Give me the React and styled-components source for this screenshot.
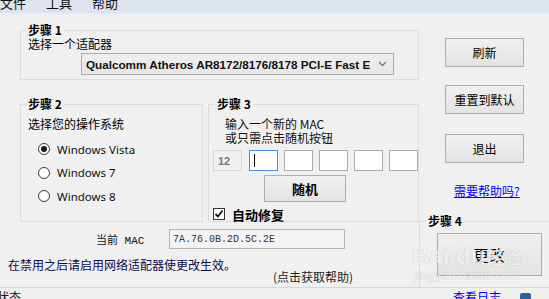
import React from 'react';
import styled, { createGlobalStyle, css } from 'styled-components';

const CJK = '"Noto Sans CJK SC", sans-serif';
const LATIN = '"Noto Sans", "Noto Sans CJK SC", sans-serif';
const MONO = '"Liberation Mono", "Noto Sans CJK SC", monospace';

const GlobalStyle = createGlobalStyle`
  html, body {
    margin: 0;
    padding: 0;
    background: #f0f0f0;
    overflow: hidden;
  }
  body {
    font-family: ${CJK};
    font-size: 12px;
    color: #000;
  }
`;

const Window = styled.div`
  position: relative;
  width: 549px;
  height: 299px;
  overflow: hidden;
  background: #f0f0f0;
`;

const MenuBar = styled.div`
  display: flex;
  gap: 20px;
  height: 13px;
  overflow: hidden;
  background: #dde4ee;
  border-bottom: 2px solid #e9eef5;
`;

const MenuItem = styled.span`
  font-size: 13px;
  line-height: 13px;
  margin-top: -4px;
  color: #111;
`;

const Main = styled.div`
  display: grid;
  grid-template-columns: 419px 130px;
  height: 272px;
`;

const Column = styled.div`
  display: flex;
  flex-direction: column;
  align-items: flex-start;
`;

const GroupBox = styled.fieldset`
  margin: 0;
  padding: 0;
  min-width: 0;
  box-sizing: border-box;
  border: 1px solid #dcdcdc;
`;

const Legend = styled.legend`
  margin-left: ${(p) => p.$offset || 5}px;
  padding: 0 2px;
  font-size: 12px;
  font-weight: 700;
  line-height: 14px;
`;

const Group1 = styled(GroupBox)`
  margin: 8px 0 0 20px;
  width: 399px;
`;

const GroupBody = styled.div`
  display: flex;
  flex-direction: column;
  align-items: flex-start;
  padding: ${(p) => p.$pad};
`;

const Caption = styled.div`
  line-height: 14px;
  margin-top: ${(p) => p.$top || 0}px;
  white-space: nowrap;
`;

const Combo = styled.div`
  display: flex;
  align-items: center;
  justify-content: space-between;
  box-sizing: border-box;
  width: 313px;
  height: 22px;
  margin: 2px 0 0 53px;
  padding: 0 6px 0 4px;
  border: 1px solid #acacac;
  background: linear-gradient(#efefef, #e6e6e6);
`;

const ComboText = styled.span`
  font-family: "Liberation Sans", sans-serif;
  font-size: 11.7px;
  font-weight: 700;
  color: #111;
  white-space: nowrap;
  overflow: hidden;
`;

const GroupRow = styled.div`
  display: flex;
  gap: 5px;
  margin: 17px 0 0 20px;
`;

const Group = styled(GroupBox)`
  width: ${(p) => p.$width}px;
  height: 125px;
`;

const RadioList = styled.div`
  display: flex;
  flex-direction: column;
  margin-top: 6.5px;
`;

const RadioRow = styled.label`
  display: flex;
  align-items: center;
  gap: 7px;
  height: 23.5px;
  padding-left: 10px;
  font-family: ${LATIN};
  font-size: 11.5px;
  color: #111;
`;

const RadioDot = styled.span`
  position: relative;
  width: 12px;
  height: 12px;
  box-sizing: border-box;
  border: 1px solid #3a3a3a;
  border-radius: 50%;
  background: #fff;

  ${(p) =>
    p.$checked &&
    css`
      &::after {
        content: '';
        position: absolute;
        left: 2px;
        top: 2px;
        width: 6px;
        height: 6px;
        border-radius: 50%;
        background: #1a1a1a;
      }
    `}
`;

const Instructions = styled.div`
  margin: 6px 0 0 12px;
  line-height: 14px;
  color: #111;
`;

const MacInputs = styled.div`
  display: flex;
  gap: 6px;
  margin-top: 5px;
`;

const PrefixBox = styled.div`
  display: flex;
  align-items: center;
  box-sizing: border-box;
  width: 29px;
  height: 21px;
  margin-right: 1px;
  padding-left: 4px;
  border: 1px solid #d9d9d9;
  background: #f0f0f0;
  font-family: "Liberation Sans", sans-serif;
  font-size: 11px;
  font-weight: 700;
  color: #7a7a7a;
`;

const ByteBox = styled.div`
  display: flex;
  align-items: center;
  box-sizing: border-box;
  width: 29px;
  height: 21px;
  padding-left: 4px;
  border: 1px solid ${(p) => (p.$focused ? '#4a8fd8' : '#abadb3')};
  background: #fff;
`;

const Caret = styled.span`
  width: 1px;
  height: 13px;
  background: #000;
`;

const Button = styled.div`
  display: flex;
  align-items: center;
  justify-content: center;
  box-sizing: border-box;
  border: 1px solid #adadad;
  background: linear-gradient(#f0f0f0, #e3e3e3);
  color: #000;
  white-space: nowrap;
`;

const RandomButton = styled(Button)`
  width: 82px;
  height: 27px;
  margin: 4px 0 0 51px;
  font-size: 13px;
  font-weight: 700;
`;

const CheckRow = styled.div`
  display: flex;
  align-items: center;
  gap: 7px;
  height: 12px;
  margin-top: 6px;
  font-size: 13px;
  font-weight: 700;
`;

const CheckBox = styled.span`
  display: flex;
  align-items: center;
  justify-content: center;
  width: 12px;
  height: 12px;
  box-sizing: border-box;
  border: 1px solid #333;
  background: #fff;
`;

const MacRow = styled.div`
  display: flex;
  align-items: center;
  margin: 7px 0 0 96px;
`;

const MacLabel = styled.span`
  width: 73px;
  font-family: ${MONO};
  font-size: 11px;
  color: #111;
  white-space: pre;
`;

const MacField = styled.div`
  display: flex;
  align-items: center;
  box-sizing: border-box;
  width: 176px;
  height: 20px;
  padding-left: 3px;
  border: 1px solid #b4b4b4;
  background: #f3f3f3;
  font-family: ${MONO};
  font-size: 10px;
  color: #333;
`;

const Notice = styled.div`
  margin: 9px 0 0 8px;
  line-height: 14px;
  color: #0b0b4c;
  white-space: nowrap;
`;

const HelpHint = styled.div`
  margin: -2px 0 0 273px;
  line-height: 14px;
  color: #222;
  white-space: nowrap;
`;

const SideButton = styled(Button)`
  width: 79px;
  height: 29px;
  margin: ${(p) => p.$top}px 0 0 26px;
  font-size: 12px;
`;

const HelpLink = styled.a`
  margin: 21px 0 0 35px;
  line-height: 14px;
  color: #0000ff;
  text-decoration: underline;
  white-space: nowrap;
`;

const Group4 = styled(GroupBox)`
  flex: 1;
  width: 140px;
  margin-top: 16px;
  border-bottom: none;
`;

const ChangeButton = styled(Button)`
  width: 105px;
  height: 43px;
  margin: 5px 0 0 17px;
  font-size: 15px;
  letter-spacing: 1px;
`;

const StatusBar = styled.div`
  display: flex;
  align-items: flex-start;
  height: 11px;
  overflow: hidden;
  border-top: 1px solid #d6d6d6;
`;

const StatusText = styled.span`
  margin: 2px 0 0 -3px;
  line-height: 14px;
  color: #111;
`;

const LogLink = styled.a`
  margin: 2px 0 0 auto;
  line-height: 14px;
  color: #0000ff;
  white-space: nowrap;
`;

const LogIcon = styled.span`
  width: 11px;
  height: 12px;
  margin: 5px 18px 0 19px;
  border-radius: 2px;
  background: #2f5f9e;
`;

const Watermark = styled.div`
  position: absolute;
  left: 412px;
  top: 243px;
  display: flex;
  flex-direction: column;
  pointer-events: none;
  color: rgba(255, 255, 255, 0.8);
  text-shadow: 0 0 1px rgba(0, 0, 0, 0.25);
`;

const WatermarkLogo = styled.div`
  display: flex;
  align-items: baseline;
  gap: 2px;
  font-family: "Liberation Sans", sans-serif;
  font-size: 24px;
  font-weight: 700;
  line-height: 26px;
`;

const WatermarkSub = styled.span`
  font-family: ${CJK};
  font-size: 17px;
  font-weight: 700;
`;

const WatermarkUrl = styled.div`
  margin-left: 2px;
  font-family: "Liberation Sans", sans-serif;
  font-size: 12px;
  line-height: 13px;
  letter-spacing: 0.5px;
`;

const osList = [
  { name: 'Windows Vista', checked: true },
  { name: 'Windows 7', checked: false },
  { name: 'Windows 8', checked: false },
];

const App = () => (
  <Window>
    <GlobalStyle />
    <MenuBar>
      <MenuItem>文件</MenuItem>
      <MenuItem>工具</MenuItem>
      <MenuItem>帮助</MenuItem>
    </MenuBar>
    <Main>
      <Column>
        <Group1>
          <Legend>步骤 1</Legend>
          <GroupBody $pad="0 0 4px 7px">
            <Caption>选择一个适配器</Caption>
            <Combo>
              <ComboText>Qualcomm Atheros AR8172/8176/8178 PCI-E Fast E</ComboText>
              <svg width="9" height="6" viewBox="0 0 9 6">
                <polyline points="1,1 4.5,4.5 8,1" fill="none" stroke="#777" strokeWidth="1.3" />
              </svg>
            </Combo>
          </GroupBody>
        </Group1>
        <GroupRow>
          <Group $width={183}>
            <Legend>步骤 2</Legend>
            <GroupBody $pad="0 0 0 7px">
              <Caption $top={6}>选择您的操作系统</Caption>
              <RadioList>
                {osList.map((os) => (
                  <RadioRow key={os.name}>
                    <RadioDot $checked={os.checked} />
                    {os.name}
                  </RadioRow>
                ))}
              </RadioList>
            </GroupBody>
          </Group>
          <Group $width={211}>
            <Legend $offset={6}>步骤 3</Legend>
            <GroupBody $pad="0 0 0 4px">
              <Instructions>
                输入一个新的 MAC
                <br />
                或只需点击随机按钮
              </Instructions>
              <MacInputs>
                <PrefixBox>12</PrefixBox>
                <ByteBox $focused>
                  <Caret />
                </ByteBox>
                <ByteBox />
                <ByteBox />
                <ByteBox />
                <ByteBox />
              </MacInputs>
              <RandomButton>随机</RandomButton>
              <CheckRow>
                <CheckBox>
                  <svg width="10" height="10" viewBox="0 0 10 10">
                    <polyline points="1.5,5 4,7.5 8.5,1.5" fill="none" stroke="#111" strokeWidth="1.8" />
                  </svg>
                </CheckBox>
                自动修复
              </CheckRow>
            </GroupBody>
          </Group>
        </GroupRow>
        <MacRow>
          <MacLabel>当前 MAC</MacLabel>
          <MacField>7A.76.0B.2D.5C.2E</MacField>
        </MacRow>
        <Notice>在禁用之后请启用网络适配器使更改生效。</Notice>
        <HelpHint>(点击获取帮助)</HelpHint>
      </Column>
      <Column>
        <SideButton $top={23}>刷新</SideButton>
        <SideButton $top={18}>重置到默认</SideButton>
        <SideButton $top={20}>退出</SideButton>
        <HelpLink>需要帮助吗?</HelpLink>
        <Group4>
          <Legend $offset={6}>步骤 4</Legend>
          <GroupBody $pad="0">
            <ChangeButton>更改</ChangeButton>
          </GroupBody>
        </Group4>
      </Column>
    </Main>
    <StatusBar>
      <StatusText>状态</StatusText>
      <LogLink>查看日志</LogLink>
      <LogIcon />
    </StatusBar>
    <Watermark>
      <WatermarkLogo>
        Bai du <WatermarkSub>经验</WatermarkSub>
      </WatermarkLogo>
      <WatermarkUrl>jingyan.baidu.com</WatermarkUrl>
    </Watermark>
  </Window>
);

export default App;
